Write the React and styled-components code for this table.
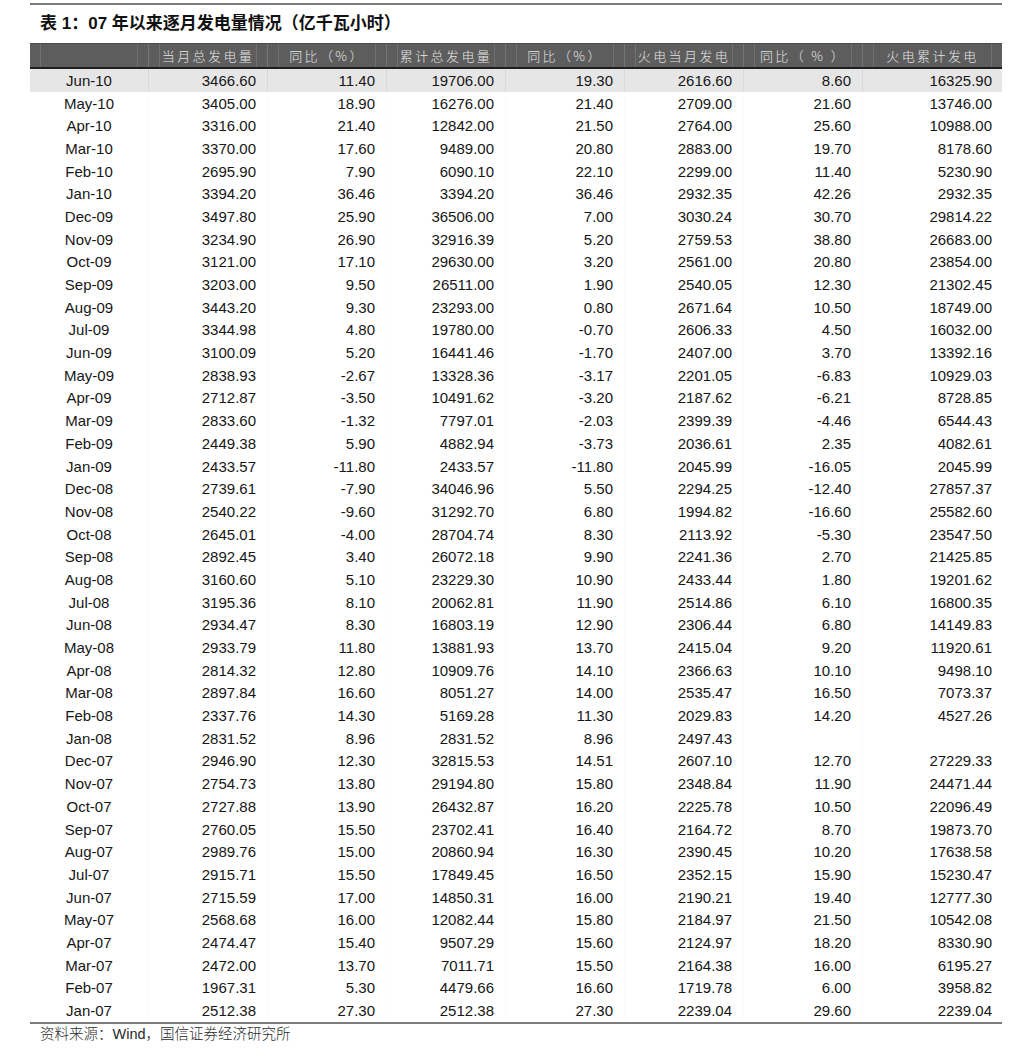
import React from "react";
import styled, { createGlobalStyle } from "styled-components";

const GlobalStyle = createGlobalStyle`
  html, body {
    margin: 0;
    padding: 0;
    background: #ffffff;
  }
  body {
    font-family: "Liberation Sans", "Noto Sans CJK SC", sans-serif;
    color: #111111;
  }
`;

const COLS = [119, 119, 119, 119, 119, 119, 119, 139];

const HEADERS = [
  "",
  "当月总发电量",
  "同比（%）",
  "累计总发电量",
  "同比（%）",
  "火电当月发电",
  "同比（ % ）",
  "火电累计发电",
];

const ROWS = [
  ["Jun-10", "3466.60", "11.40", "19706.00", "19.30", "2616.60", "8.60", "16325.90"],
  ["May-10", "3405.00", "18.90", "16276.00", "21.40", "2709.00", "21.60", "13746.00"],
  ["Apr-10", "3316.00", "21.40", "12842.00", "21.50", "2764.00", "25.60", "10988.00"],
  ["Mar-10", "3370.00", "17.60", "9489.00", "20.80", "2883.00", "19.70", "8178.60"],
  ["Feb-10", "2695.90", "7.90", "6090.10", "22.10", "2299.00", "11.40", "5230.90"],
  ["Jan-10", "3394.20", "36.46", "3394.20", "36.46", "2932.35", "42.26", "2932.35"],
  ["Dec-09", "3497.80", "25.90", "36506.00", "7.00", "3030.24", "30.70", "29814.22"],
  ["Nov-09", "3234.90", "26.90", "32916.39", "5.20", "2759.53", "38.80", "26683.00"],
  ["Oct-09", "3121.00", "17.10", "29630.00", "3.20", "2561.00", "20.80", "23854.00"],
  ["Sep-09", "3203.00", "9.50", "26511.00", "1.90", "2540.05", "12.30", "21302.45"],
  ["Aug-09", "3443.20", "9.30", "23293.00", "0.80", "2671.64", "10.50", "18749.00"],
  ["Jul-09", "3344.98", "4.80", "19780.00", "-0.70", "2606.33", "4.50", "16032.00"],
  ["Jun-09", "3100.09", "5.20", "16441.46", "-1.70", "2407.00", "3.70", "13392.16"],
  ["May-09", "2838.93", "-2.67", "13328.36", "-3.17", "2201.05", "-6.83", "10929.03"],
  ["Apr-09", "2712.87", "-3.50", "10491.62", "-3.20", "2187.62", "-6.21", "8728.85"],
  ["Mar-09", "2833.60", "-1.32", "7797.01", "-2.03", "2399.39", "-4.46", "6544.43"],
  ["Feb-09", "2449.38", "5.90", "4882.94", "-3.73", "2036.61", "2.35", "4082.61"],
  ["Jan-09", "2433.57", "-11.80", "2433.57", "-11.80", "2045.99", "-16.05", "2045.99"],
  ["Dec-08", "2739.61", "-7.90", "34046.96", "5.50", "2294.25", "-12.40", "27857.37"],
  ["Nov-08", "2540.22", "-9.60", "31292.70", "6.80", "1994.82", "-16.60", "25582.60"],
  ["Oct-08", "2645.01", "-4.00", "28704.74", "8.30", "2113.92", "-5.30", "23547.50"],
  ["Sep-08", "2892.45", "3.40", "26072.18", "9.90", "2241.36", "2.70", "21425.85"],
  ["Aug-08", "3160.60", "5.10", "23229.30", "10.90", "2433.44", "1.80", "19201.62"],
  ["Jul-08", "3195.36", "8.10", "20062.81", "11.90", "2514.86", "6.10", "16800.35"],
  ["Jun-08", "2934.47", "8.30", "16803.19", "12.90", "2306.44", "6.80", "14149.83"],
  ["May-08", "2933.79", "11.80", "13881.93", "13.70", "2415.04", "9.20", "11920.61"],
  ["Apr-08", "2814.32", "12.80", "10909.76", "14.10", "2366.63", "10.10", "9498.10"],
  ["Mar-08", "2897.84", "16.60", "8051.27", "14.00", "2535.47", "16.50", "7073.37"],
  ["Feb-08", "2337.76", "14.30", "5169.28", "11.30", "2029.83", "14.20", "4527.26"],
  ["Jan-08", "2831.52", "8.96", "2831.52", "8.96", "2497.43", "", ""],
  ["Dec-07", "2946.90", "12.30", "32815.53", "14.51", "2607.10", "12.70", "27229.33"],
  ["Nov-07", "2754.73", "13.80", "29194.80", "15.80", "2348.84", "11.90", "24471.44"],
  ["Oct-07", "2727.88", "13.90", "26432.87", "16.20", "2225.78", "10.50", "22096.49"],
  ["Sep-07", "2760.05", "15.50", "23702.41", "16.40", "2164.72", "8.70", "19873.70"],
  ["Aug-07", "2989.76", "15.00", "20860.94", "16.30", "2390.45", "10.20", "17638.58"],
  ["Jul-07", "2915.71", "15.50", "17849.45", "16.50", "2352.15", "15.90", "15230.47"],
  ["Jun-07", "2715.59", "17.00", "14850.31", "16.00", "2190.21", "19.40", "12777.30"],
  ["May-07", "2568.68", "16.00", "12082.44", "15.80", "2184.97", "21.50", "10542.08"],
  ["Apr-07", "2474.47", "15.40", "9507.29", "15.60", "2124.97", "18.20", "8330.90"],
  ["Mar-07", "2472.00", "13.70", "7011.71", "15.50", "2164.38", "16.00", "6195.27"],
  ["Feb-07", "1967.31", "5.30", "4479.66", "16.60", "1719.78", "6.00", "3958.82"],
  ["Jan-07", "2512.38", "27.30", "2512.38", "27.30", "2239.04", "29.60", "2239.04"],
];

const template = COLS.map((w) => `${w}px`).join(" ");

export default function App() {
  return (
    <>
      <GlobalStyle />
      <Page>
        <Rule />
        <Title>
          表 1：07 年以来逐月发电量情况（亿千瓦小时）
        </Title>
        <HeadRow>
          {HEADERS.map((h, i) => (
            <HeadCell key={i}>
              <HeadLabel>{h}</HeadLabel>
            </HeadCell>
          ))}
        </HeadRow>
        <Body>
          {ROWS.map((r, i) => (
            <Row key={r[0]} $shade={i === 0}>
              {r.map((v, j) => (
                <Cell key={j} $date={j === 0} $shade={i === 0}>
                  {v}
                </Cell>
              ))}
            </Row>
          ))}
        </Body>
        <Rule />
        <Source>
          资料来源：Wind，国信证券经济研究所
        </Source>
      </Page>
    </>
  );
}

const Page = styled.div`
  width: 972px;
  margin-left: 30px;
  padding-top: 3px;
`;

const Rule = styled.div`
  height: 2px;
  background: #7c7c7c;
`;

const Title = styled.h1`
  margin: 8px 0 9px 10px;
  font-family: "Liberation Sans", "Noto Sans CJK SC", sans-serif;
  font-size: 17px;
  line-height: 22px;
  font-weight: 700;
  color: #111111;
  white-space: nowrap;
`;

const HeadRow = styled.div`
  display: grid;
  grid-template-columns: ${template};
  height: 23px;
  background: #5d5d5d;
  border-top: 1px solid #4a4a4a;
  border-bottom: 2px solid #1e1e1e;
  box-sizing: content-box;
  margin-top: -1px;
`;

const HeadCell = styled.div`
  display: flex;
  padding: 0 10px;
  border-right: 1px solid #747474;
  &:last-child {
    border-right: none;
  }
`;

const HeadLabel = styled.div`
  flex: 1;
  display: flex;
  align-items: center;
  justify-content: center;
  border-left: 1px solid #727272;
  border-right: 1px solid #727272;
  font-family: "Noto Sans CJK SC", sans-serif;
  font-size: 13px;
  font-weight: 300;
  letter-spacing: 2.4px;
  color: #e4e4e4;
  white-space: nowrap;
`;

const Body = styled.div`
  display: flex;
  flex-direction: column;
`;

const Row = styled.div`
  display: grid;
  grid-template-columns: ${template};
  height: 22.7px;
  background: ${(p) => (p.$shade ? "#e6e6e6" : "#ffffff")};
`;

const Cell = styled.div`
  display: flex;
  align-items: center;
  justify-content: ${(p) => (p.$date ? "center" : "flex-end")};
  padding-right: ${(p) => (p.$date ? "0" : "11px")};
  font-size: 15px;
  color: #161616;
  white-space: nowrap;
  border-right: 1px solid ${(p) => (p.$shade ? "#d9d9d9" : "#fbfbfb")};
  &:last-child {
    border-right: none;
    padding-right: 10px;
  }
`;

const Source = styled.div`
  margin: 0 0 0 10px;
  font-family: "Liberation Sans", "Noto Sans CJK SC", sans-serif;
  font-size: 14.5px;
  font-weight: 300;
  line-height: 20px;
  color: #2a2a2a;
`;
